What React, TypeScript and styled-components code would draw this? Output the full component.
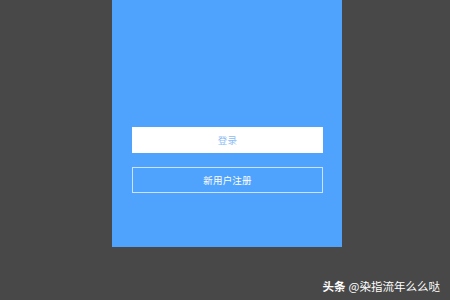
import React from "react";
import styled, { createGlobalStyle } from "styled-components";

const Global = createGlobalStyle`
  html, body { margin: 0; padding: 0; }
  body {
    width: 450px;
    height: 300px;
    background: #484848;
    overflow: hidden;
    font-family: "Noto Sans CJK SC", "Noto Sans", sans-serif;
  }
`;

const Stage = styled.div`
  position: relative;
  width: 450px;
  height: 300px;
  display: flex;
  align-items: flex-start;
  padding-left: 112px;
  box-sizing: border-box;
`;

const Phone = styled.div`
  width: 230px;
  height: 247px;
  background: #4fa3fc;
  display: flex;
  flex-direction: column;
  padding: 127px 19px 0 20px;
  box-sizing: border-box;
  gap: 14px;
`;

const Button = styled.div<{ $filled?: boolean }>`
  height: 26px;
  box-sizing: border-box;
  display: flex;
  align-items: center;
  justify-content: center;
  font-size: 9.5px;
  letter-spacing: 0.2px;
  background: ${(p) => (p.$filled ? "#ffffff" : "transparent")};
  color: ${(p) => (p.$filled ? "#8dbcf2" : "#ffffff")};
  border: 1px solid ${(p) => (p.$filled ? "#ffffff" : "#c9e2fd")};
`;

const Watermark = styled.div`
  position: absolute;
  right: 10px;
  bottom: 7px;
  color: #ffffff;
  font-size: 11.5px;
  line-height: 14px;
  white-space: nowrap;
`;

const Brand = styled.span`
  font-weight: 700;
  margin-right: 3px;
`;

export default function App() {
  return (
    <>
      <Global />
      <Stage>
        <Phone>
          <Button $filled>登录</Button>
          <Button>新用户注册</Button>
        </Phone>
        <Watermark>
          <Brand>头条</Brand>@染指流年么么哒
        </Watermark>
      </Stage>
    </>
  );
}
